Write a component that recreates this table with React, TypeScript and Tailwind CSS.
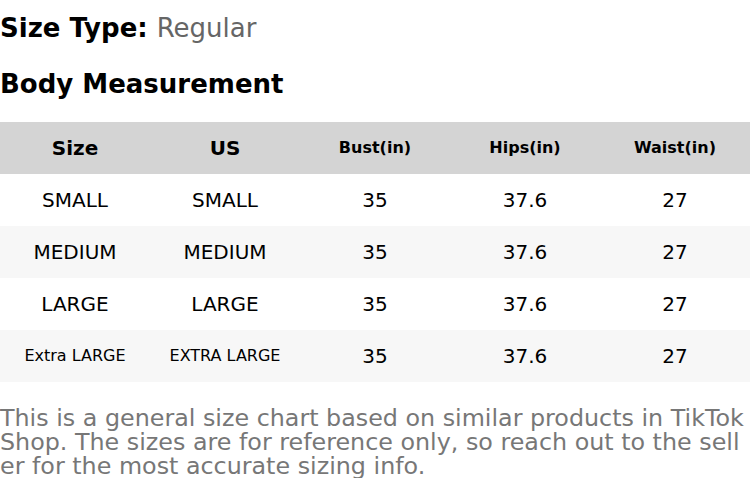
const rows = [
  { size: "SMALL", us: "SMALL", bust: "35", hips: "37.6", waist: "27" },
  { size: "MEDIUM", us: "MEDIUM", bust: "35", hips: "37.6", waist: "27" },
  { size: "LARGE", us: "LARGE", bust: "35", hips: "37.6", waist: "27" },
  { size: "Extra LARGE", us: "EXTRA LARGE", bust: "35", hips: "37.6", waist: "27", small: true },
];

export default function App() {
  return (
    <div className="w-[750px] bg-white text-black font-['DejaVu_Sans',sans-serif]">
      {/* Header */}
      <div className="h-[56px] flex items-center text-[26px] leading-none">
        <span className="font-bold">Size Type:</span>
        <span className="ml-[9px] text-[#666666]">Regular</span>
      </div>
      <div className="h-[56px] flex items-center text-[26px] leading-none font-bold">
        Body Measurement
      </div>

      {/* Table */}
      <div className="mt-[10px]">
        <div className="grid grid-cols-5 h-[52px] items-center bg-[#d4d4d4] font-bold text-center">
          <div className="text-[20px]">Size</div>
          <div className="text-[20px]">US</div>
          <div className="text-[16px]">Bust(in)</div>
          <div className="text-[16px]">Hips(in)</div>
          <div className="text-[16px]">Waist(in)</div>
        </div>
        {rows.map((r, i) => (
          <div
            key={r.size}
            className={`grid grid-cols-5 h-[52px] items-center text-center text-[20px] ${
              i % 2 === 1 ? "bg-[#f7f7f7]" : "bg-white"
            }`}
          >
            <div className={r.small ? "text-[16px]" : ""}>{r.size}</div>
            <div className={r.small ? "text-[16px]" : ""}>{r.us}</div>
            <div>{r.bust}</div>
            <div>{r.hips}</div>
            <div>{r.waist}</div>
          </div>
        ))}
      </div>

      {/* Footer */}
      <p className="mt-[24px] text-[23.8px] leading-[24px] text-[#777777] break-all">
        This is a general size chart based on similar products in TikTok Shop. The sizes are for reference only, so reach out to the seller for the most accurate sizing info.
      </p>
    </div>
  );
}
